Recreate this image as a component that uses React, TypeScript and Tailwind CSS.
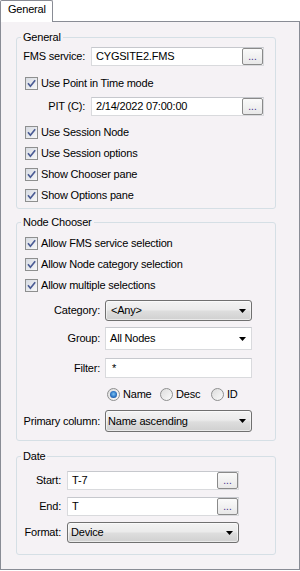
import React from "react";

function Check({ label }: { label: string }) {
  return (
    <div className="flex h-[21px] items-center pl-[8px]">
      <div className="flex h-[13px] w-[13px] shrink-0 items-center justify-center border border-[#8e8f8f] bg-[linear-gradient(135deg,#d6dae2,#f8f8f8)]">
        <svg width="11" height="11" viewBox="0 0 11 11">
          <path d="M2 5.3L4.4 8.2L9.2 2.3" fill="none" stroke="#4a5b94" strokeWidth="1.7" />
        </svg>
      </div>
      <span className="ml-[3px] whitespace-nowrap">{label}</span>
    </div>
  );
}

function DotsButton() {
  return (
    <div className="flex h-[17px] w-[21px] shrink-0 items-end justify-center rounded-[2px] border border-[#8a8a8a] bg-[linear-gradient(to_bottom,#fafafa,#e8e8e8)] pb-[3px]">
      <span className="text-[10px] leading-[8px] tracking-[0px] text-[#3b2a8c]">...</span>
    </div>
  );
}

function TextBox({ value, button, w, h = "h-[19px]", pl = "pl-[4px]" }: { value: string; button?: boolean; w: string; h?: string; pl?: string }) {
  return (
    <div className={`flex ${h} ${w} items-center border border-[#d9dadd] border-t-[#c6c8cd] bg-white`}>
      <span className={`flex-1 whitespace-nowrap ${pl}`}>{value}</span>
      {button && <DotsButton />}
    </div>
  );
}

function Arrow() {
  return (
    <svg width="7" height="4" viewBox="0 0 7 4" className="shrink-0">
      <path d="M0 0H7L3.5 4Z" fill="#000" />
    </svg>
  );
}

function ClassicSelect({ value, w, h, pl }: { value: string; w: string; h: string; pl: string }) {
  return (
    <div
      className={`flex ${h} ${w} items-center rounded-[3px] border border-[#707070] bg-[linear-gradient(to_bottom,#f3f3f3_0%,#ebebeb_45%,#dddddd_55%,#d0d0d0_100%)] shadow-[inset_0_0_0_1px_rgba(255,255,255,0.55)] pr-[5px]`}
    >
      <span className={`flex-1 whitespace-nowrap ${pl}`}>{value}</span>
      <Arrow />
    </div>
  );
}

function EditSelect({ value, w, h }: { value: string; w: string; h: string }) {
  return (
    <div className={`flex ${h} ${w} items-center border border-[#d9dadd] border-t-[#c6c8cd] bg-white pr-[5px]`}>
      <span className="flex-1 whitespace-nowrap pl-[4px]">{value}</span>
      <Arrow />
    </div>
  );
}

function Radio({ label, checked, w }: { label: string; checked?: boolean; w: string }) {
  return (
    <div className={`flex items-center ${w}`}>
      <div className="flex h-[13px] w-[13px] shrink-0 items-center justify-center rounded-full border border-[#8e8f8f] bg-[linear-gradient(135deg,#dcdcdc,#fbfbfb)]">
        {checked && (
          <div className="h-[7px] w-[7px] rounded-full bg-[radial-gradient(circle_at_50%_45%,#7cc4f2_0%,#2b73c4_55%,#123c78_100%)]" />
        )}
      </div>
      <span className="ml-[3px] whitespace-nowrap">{label}</span>
    </div>
  );
}

function Group({ title, className, children }: { title: string; className: string; children: React.ReactNode }) {
  return (
    <fieldset className={`m-0 w-[260px] min-w-0 rounded-[3px] border border-[#d5dfe5] p-0 ${className}`}>
      <legend className="ml-[4px] h-[13px] px-[2px] leading-[13px]">{title}</legend>
      {children}
    </fieldset>
  );
}

export default function App() {
  return (
    <div className="h-[571px] w-[300px] bg-white text-[11px] leading-[13px] tracking-[-0.2px] text-black font-['Liberation_Sans',Arial,sans-serif]">
      <div className="flex h-[21px]">
        <div className="relative z-10 h-[22px] w-[53px] rounded-t-[2px] border border-b-0 border-[#898c95] bg-white pl-[7px] pt-[2px]">
          General
        </div>
      </div>
      <div className="flex h-[549px] flex-col border border-[#898c95] bg-[#f5f2f5] pl-[15px]">
        <Group title="General" className="mt-[9px]">
          <div className="flex flex-col pb-[2px]">
            <div className="mt-[3px] flex items-center">
              <span className="w-[68px] shrink-0 whitespace-nowrap text-right">FMS service:</span>
              <div className="ml-[6px]">
                <TextBox value="CYGSITE2.FMS" button w="w-[173px]" />
              </div>
            </div>
            <div className="mt-[7px]">
              <Check label="Use Point in Time mode" />
            </div>
            <div className="mt-[3px] flex items-center">
              <span className="w-[68px] shrink-0 whitespace-nowrap text-right">PIT (C):</span>
              <div className="ml-[6px]">
                <TextBox value="2/14/2022 07:00:00" button w="w-[173px]" />
              </div>
            </div>
            <div className="mt-[6px] flex flex-col">
              <Check label="Use Session Node" />
              <Check label="Use Session options" />
              <Check label="Show Chooser pane" />
              <Check label="Show Options pane" />
            </div>
          </div>
        </Group>

        <Group title="Node Chooser" className="mt-[7px]">
          <div className="flex flex-col pb-[8px]">
            <div className="mt-[4px] flex flex-col">
              <Check label="Allow FMS service selection" />
              <Check label="Allow Node category selection" />
              <Check label="Allow multiple selections" />
            </div>
            <div className="mt-[4px] flex items-center">
              <span className="w-[83px] shrink-0 whitespace-nowrap text-right">Category:</span>
              <div className="ml-[5px]">
                <ClassicSelect value="<Any>" w="w-[147px]" h="h-[21px]" pl="pl-[5px]" />
              </div>
            </div>
            <div className="mt-[6px] flex items-center">
              <span className="w-[83px] shrink-0 whitespace-nowrap text-right">Group:</span>
              <div className="ml-[5px]">
                <EditSelect value="All Nodes" w="w-[147px]" h="h-[23px]" />
              </div>
            </div>
            <div className="mt-[8px] flex items-center">
              <span className="w-[83px] shrink-0 whitespace-nowrap text-right">Filter:</span>
              <div className="ml-[5px]">
                <TextBox value="*" w="w-[147px]" h="h-[20px]" pl="pl-[6px]" />
              </div>
            </div>
            <div className="mt-[6px] flex h-[20px] items-center pl-[90px]">
              <Radio label="Name" checked w="w-[53px]" />
              <Radio label="Desc" w="w-[51px]" />
              <Radio label="ID" w="w-[30px]" />
            </div>
            <div className="mt-[6px] flex items-center">
              <span className="w-[83px] shrink-0 whitespace-nowrap text-right">Primary column:</span>
              <div className="ml-[5px]">
                <ClassicSelect value="Name ascending" w="w-[147px]" h="h-[22px]" pl="pl-[2px]" />
              </div>
            </div>
          </div>
        </Group>

        <Group title="Date" className="mt-[9px]">
          <div className="flex flex-col pb-[11px]">
            <div className="mt-[8px] flex items-center">
              <span className="w-[44px] shrink-0 whitespace-nowrap text-right">Start:</span>
              <div className="ml-[6px]">
                <TextBox value="T-7" button w="w-[172px]" />
              </div>
            </div>
            <div className="mt-[7px] flex items-center">
              <span className="w-[44px] shrink-0 whitespace-nowrap text-right">End:</span>
              <div className="ml-[6px]">
                <TextBox value="T" button w="w-[172px]" />
              </div>
            </div>
            <div className="mt-[6px] flex items-center">
              <span className="w-[44px] shrink-0 whitespace-nowrap text-right">Format:</span>
              <div className="ml-[6px]">
                <ClassicSelect value="Device" w="w-[172px]" h="h-[21px]" pl="pl-[3px]" />
              </div>
            </div>
          </div>
        </Group>
      </div>
    </div>
  );
}
